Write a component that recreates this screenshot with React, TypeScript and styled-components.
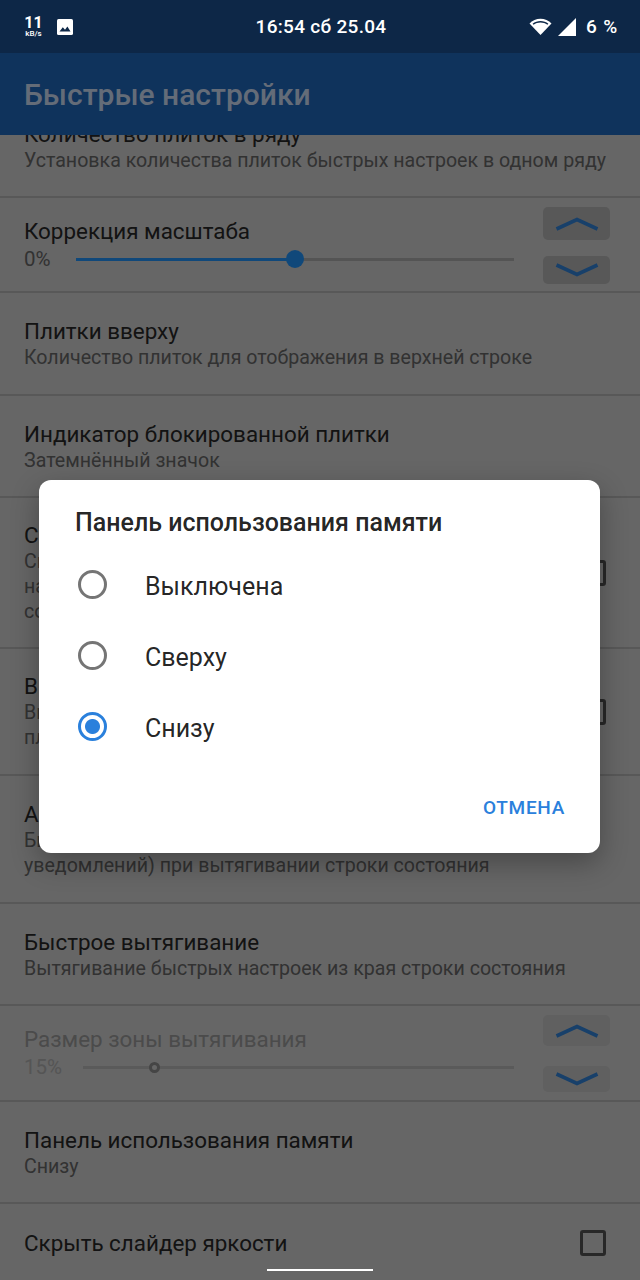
import React from "react";
import styled, { createGlobalStyle } from "styled-components";

const GlobalStyle = createGlobalStyle`
  html, body {
    margin: 0;
    padding: 0;
    background: #ccc;
  }
`;

const options = ["Выключена", "Сверху", "Снизу"];

function Chevron({ down }: { down?: boolean }) {
  return (
    <svg width="44" height="14" viewBox="0 0 44 14">
      <path
        d={down ? "M1.5 2 L22 11.5 L42.5 2" : "M1.5 12 L22 2.5 L42.5 12"}
        fill="none"
        stroke="#3080d4"
        strokeWidth="3.6"
      />
    </svg>
  );
}

function WifiIcon() {
  return (
    <svg width="23" height="17" viewBox="0 0 23 17">
      <path d="M0.5 5.5 C6 -1 17 -1 22.5 5.5 L11.5 17 Z" fill="#fff" />
      <path d="M3.6 5.8 C8 2 15 2 19.4 5.8 L18.4 6.8 C14.5 3.8 8.5 3.8 4.6 6.8 Z" fill="#0d2747" />
    </svg>
  );
}

function SignalIcon() {
  return (
    <svg width="18" height="18" viewBox="0 0 18 18">
      <path d="M18 0 V18 H0 Z" fill="#fff" />
    </svg>
  );
}

function ImageIcon() {
  return (
    <svg width="16" height="16" viewBox="0 0 16 16">
      <rect width="16" height="16" rx="1.6" fill="#fff" />
      <path d="M2.5 12.5 L5.8 8.2 L8 10.8 L10.4 7.6 L13.5 12.5 Z" fill="#0d2747" />
    </svg>
  );
}

function App() {
  return (
    <Screen>
      <GlobalStyle />
      <StatusBar>
        <StatusLeft>
          <Speed>
            <SpeedValue>11</SpeedValue>
            <SpeedUnit>kB/s</SpeedUnit>
          </Speed>
          <ImageIcon />
        </StatusLeft>
        <Clock>16:54 сб 25.04</Clock>
        <StatusRight>
          <WifiIcon />
          <SignalIcon />
          <Battery>6 %</Battery>
        </StatusRight>
      </StatusBar>

      <Body>
        <AppBar>
          <AppTitle>Быстрые настройки</AppTitle>
        </AppBar>

        <List>
          <Row $height={102}>
            <RowTitle>Количество плиток в ряду</RowTitle>
            <RowText>Установка количества плиток быстрых настроек в одном ряду</RowText>
          </Row>

          <SliderRow $height={95}>
            <SliderMain>
              <RowTitle>Коррекция масштаба</RowTitle>
              <SliderLine>
                <SliderValue $width={52}>0%</SliderValue>
                <Track>
                  <TrackFill style={{ width: "50%" }} />
                  <Knob style={{ left: "50%" }} />
                </Track>
              </SliderLine>
            </SliderMain>
            <Steppers>
              <Stepper $height={33}>
                <Chevron />
              </Stepper>
              <Stepper $height={28}>
                <Chevron down />
              </Stepper>
            </Steppers>
          </SliderRow>

          <Row $height={103}>
            <RowTitle>Плитки вверху</RowTitle>
            <RowText>Количество плиток для отображения в верхней строке</RowText>
          </Row>

          <Row $height={102}>
            <RowTitle>Индикатор блокированной плитки</RowTitle>
            <RowText>Затемнённый значок</RowText>
          </Row>

          <CheckRow $height={151}>
            <div>
              <RowTitle>Скрывать заголовки</RowTitle>
              <RowText>
                Скрывать подписи плиток
                <br />
                на панели быстрых настроек
                <br />
                со всеми значками
              </RowText>
            </div>
            <Checkbox />
          </CheckRow>

          <CheckRow $height={127}>
            <div>
              <RowTitle>Вибрация при нажатии</RowTitle>
              <RowText>
                Вибрация при нажатии на
                <br />
                плитки быстрых настроек
              </RowText>
            </div>
            <Checkbox />
          </CheckRow>

          <Row $height={128}>
            <RowTitle>Автораскрытие</RowTitle>
            <RowText>
              Быстрые настройки (вместо
              <br />
              уведомлений) при вытягивании строки состояния
            </RowText>
          </Row>

          <Row $height={102}>
            <RowTitle>Быстрое вытягивание</RowTitle>
            <RowText>Вытягивание быстрых настроек из края строки состояния</RowText>
          </Row>

          <SliderRow $height={96}>
            <SliderMain>
              <RowTitle $disabled>Размер зоны вытягивания</RowTitle>
              <SliderLine>
                <SliderValue $width={59} $disabled>
                  15%
                </SliderValue>
                <Track $disabled>
                  <HollowKnob style={{ left: "16.5%" }} />
                </Track>
              </SliderLine>
            </SliderMain>
            <Steppers>
              <Stepper $height={31} $disabled>
                <Chevron />
              </Stepper>
              <Stepper $height={26} $disabled>
                <Chevron down />
              </Stepper>
            </Steppers>
          </SliderRow>

          <Row $height={102}>
            <RowTitle>Панель использования памяти</RowTitle>
            <RowText>Снизу</RowText>
          </Row>

          <CheckRow $height={80}>
            <RowTitle>Скрыть слайдер яркости</RowTitle>
            <Checkbox />
          </CheckRow>
        </List>

        <Scrim />

        <Dialog>
          <DialogTitle>Панель использования памяти</DialogTitle>
          <Options>
            {options.map(option => (
              <Option key={option}>
                <Radio $checked={option === "Снизу"} />
                <OptionLabel>{option}</OptionLabel>
              </Option>
            ))}
          </Options>
          <DialogActions>
            <CancelButton>ОТМЕНА</CancelButton>
          </DialogActions>
        </Dialog>
      </Body>

      <HomeBar />
    </Screen>
  );
}

const Screen = styled.div`
  position: relative;
  width: 640px;
  height: 1280px;
  overflow: hidden;
  display: flex;
  flex-direction: column;
  font-family: Roboto, "Noto Sans", sans-serif;
`;

const StatusBar = styled.div`
  flex: none;
  height: 53px;
  padding: 0 22px 0 24px;
  box-sizing: border-box;
  display: grid;
  grid-template-columns: 1fr auto 1fr;
  align-items: center;
  background: #0d2747;
  color: #fff;
`;

const StatusLeft = styled.div`
  display: flex;
  align-items: center;
  gap: 14px;
`;

const Speed = styled.div`
  display: flex;
  flex-direction: column;
  align-items: center;
  width: 19px;
`;

const SpeedValue = styled.span`
  font-size: 16px;
  line-height: 14px;
  font-weight: 700;
`;

const SpeedUnit = styled.span`
  font-size: 8px;
  line-height: 8px;
  font-weight: 500;
`;

const Clock = styled.div`
  font-size: 19px;
  font-weight: 500;
  letter-spacing: 0.3px;
`;

const StatusRight = styled.div`
  display: flex;
  align-items: center;
  justify-content: flex-end;
  gap: 6px;
`;

const Battery = styled.span`
  margin-left: 4px;
  font-size: 19px;
  font-weight: 500;
  letter-spacing: 0.8px;
`;

const Body = styled.div`
  position: relative;
  flex: 1;
  min-height: 0;
  display: flex;
  flex-direction: column;
  overflow: hidden;
`;

const AppBar = styled.div`
  position: relative;
  z-index: 1;
  flex: none;
  height: 82px;
  padding-left: 24px;
  display: flex;
  align-items: center;
  background: #1e66b8;
`;

const AppTitle = styled.h1`
  margin: 0;
  font-size: 30px;
  font-weight: 500;
  color: #c8d8f0;
`;

const List = styled.div`
  margin-top: -39px;
  background: #ccc;
`;

const Row = styled.div<{ $height: number }>`
  height: ${p => p.$height}px;
  padding: 25px 24px 0;
  box-sizing: border-box;
  border-bottom: 2px solid #b0b0b0;
`;

const RowTitle = styled.div<{ $disabled?: boolean }>`
  font-size: 22.4px;
  line-height: 27px;
  white-space: nowrap;
  color: ${p => (p.$disabled ? "#969696" : "#262626")};
`;

const RowText = styled.div`
  font-size: 19.6px;
  line-height: 25px;
  white-space: nowrap;
  color: #646464;
`;

const CheckRow = styled.div<{ $height: number }>`
  height: ${p => p.$height}px;
  padding: 0 34px 0 24px;
  box-sizing: border-box;
  border-bottom: 2px solid #b0b0b0;
  display: flex;
  align-items: center;
  justify-content: space-between;
`;

const Checkbox = styled.div`
  width: 26px;
  height: 26px;
  box-sizing: border-box;
  border: 3px solid #505050;
  border-radius: 3px;
`;

const SliderRow = styled.div<{ $height: number }>`
  height: ${p => p.$height}px;
  padding: 9px 30px 0 24px;
  box-sizing: border-box;
  border-bottom: 2px solid #b0b0b0;
  display: flex;
  justify-content: space-between;
`;

const SliderMain = styled.div`
  width: 490px;
  padding-top: 11px;
`;

const SliderLine = styled.div`
  display: flex;
  align-items: center;
  height: 26px;
  margin-top: 1px;
`;

const SliderValue = styled.span<{ $width: number; $disabled?: boolean }>`
  width: ${p => p.$width}px;
  flex: none;
  font-size: 20.5px;
  color: ${p => (p.$disabled ? "#aaa" : "#646464")};
`;

const Track = styled.div<{ $disabled?: boolean }>`
  position: relative;
  flex: 1;
  height: 3px;
  background: ${p => (p.$disabled ? "#b4b4b4" : "#a8a8a8")};
`;

const TrackFill = styled.div`
  height: 100%;
  background: #2090f4;
`;

const Knob = styled.div`
  position: absolute;
  top: -7.5px;
  width: 18px;
  height: 18px;
  margin-left: -9px;
  border-radius: 50%;
  background: #2090f4;
`;

const HollowKnob = styled.div`
  position: absolute;
  top: -4px;
  width: 11px;
  height: 11px;
  margin-left: -5.5px;
  box-sizing: border-box;
  border: 3px solid #8a8a8a;
  border-radius: 50%;
  background: #ccc;
`;

const Steppers = styled.div`
  width: 67px;
  display: flex;
  flex-direction: column;
  justify-content: space-between;
  height: 77px;
`;

const Stepper = styled.div<{ $height: number; $disabled?: boolean }>`
  height: ${p => p.$height}px;
  border-radius: 5px;
  display: flex;
  align-items: center;
  justify-content: center;
  background: ${p => (p.$disabled ? "#c0c0c0" : "#b0b0b0")};
`;

const Scrim = styled.div`
  position: absolute;
  inset: 0;
  z-index: 2;
  background: rgba(0, 0, 0, 0.5);
`;

const Dialog = styled.div`
  position: absolute;
  z-index: 3;
  left: 39px;
  top: 427px;
  width: 561px;
  height: 373px;
  box-sizing: border-box;
  padding: 27px 35px 0 36px;
  display: flex;
  flex-direction: column;
  background: #fff;
  border-radius: 12px;
  box-shadow: 0 10px 28px rgba(0, 0, 0, 0.3);
`;

const DialogTitle = styled.h2`
  margin: 0;
  font-size: 25px;
  line-height: 32px;
  font-weight: 500;
  color: rgba(0, 0, 0, 0.87);
`;

const Options = styled.div`
  margin-top: 10px;
  display: flex;
  flex-direction: column;
`;

const Option = styled.div`
  height: 71px;
  display: flex;
  align-items: center;
  gap: 38px;
  font-size: 25px;
  color: rgba(0, 0, 0, 0.87);
`;

const OptionLabel = styled.span`
  padding-top: 3px;
`;

const Radio = styled.span<{ $checked?: boolean }>`
  width: 29px;
  height: 29px;
  margin-left: 3px;
  flex: none;
  box-sizing: border-box;
  border-radius: 50%;
  border: 3px solid ${p => (p.$checked ? "#2a80dc" : "#757575")};
  background: ${p => (p.$checked ? "radial-gradient(circle, #2a80dc 0 7px, #fff 8px)" : "#fff")};
`;

const DialogActions = styled.div`
  margin-top: 34px;
  display: flex;
  justify-content: flex-end;
`;

const CancelButton = styled.span`
  font-size: 19px;
  font-weight: 500;
  letter-spacing: 0.7px;
  color: #2a80dc;
`;

const HomeBar = styled.div`
  position: absolute;
  z-index: 4;
  left: 267px;
  bottom: 9px;
  width: 106px;
  height: 2px;
  background: #fff;
`;

export default App;
